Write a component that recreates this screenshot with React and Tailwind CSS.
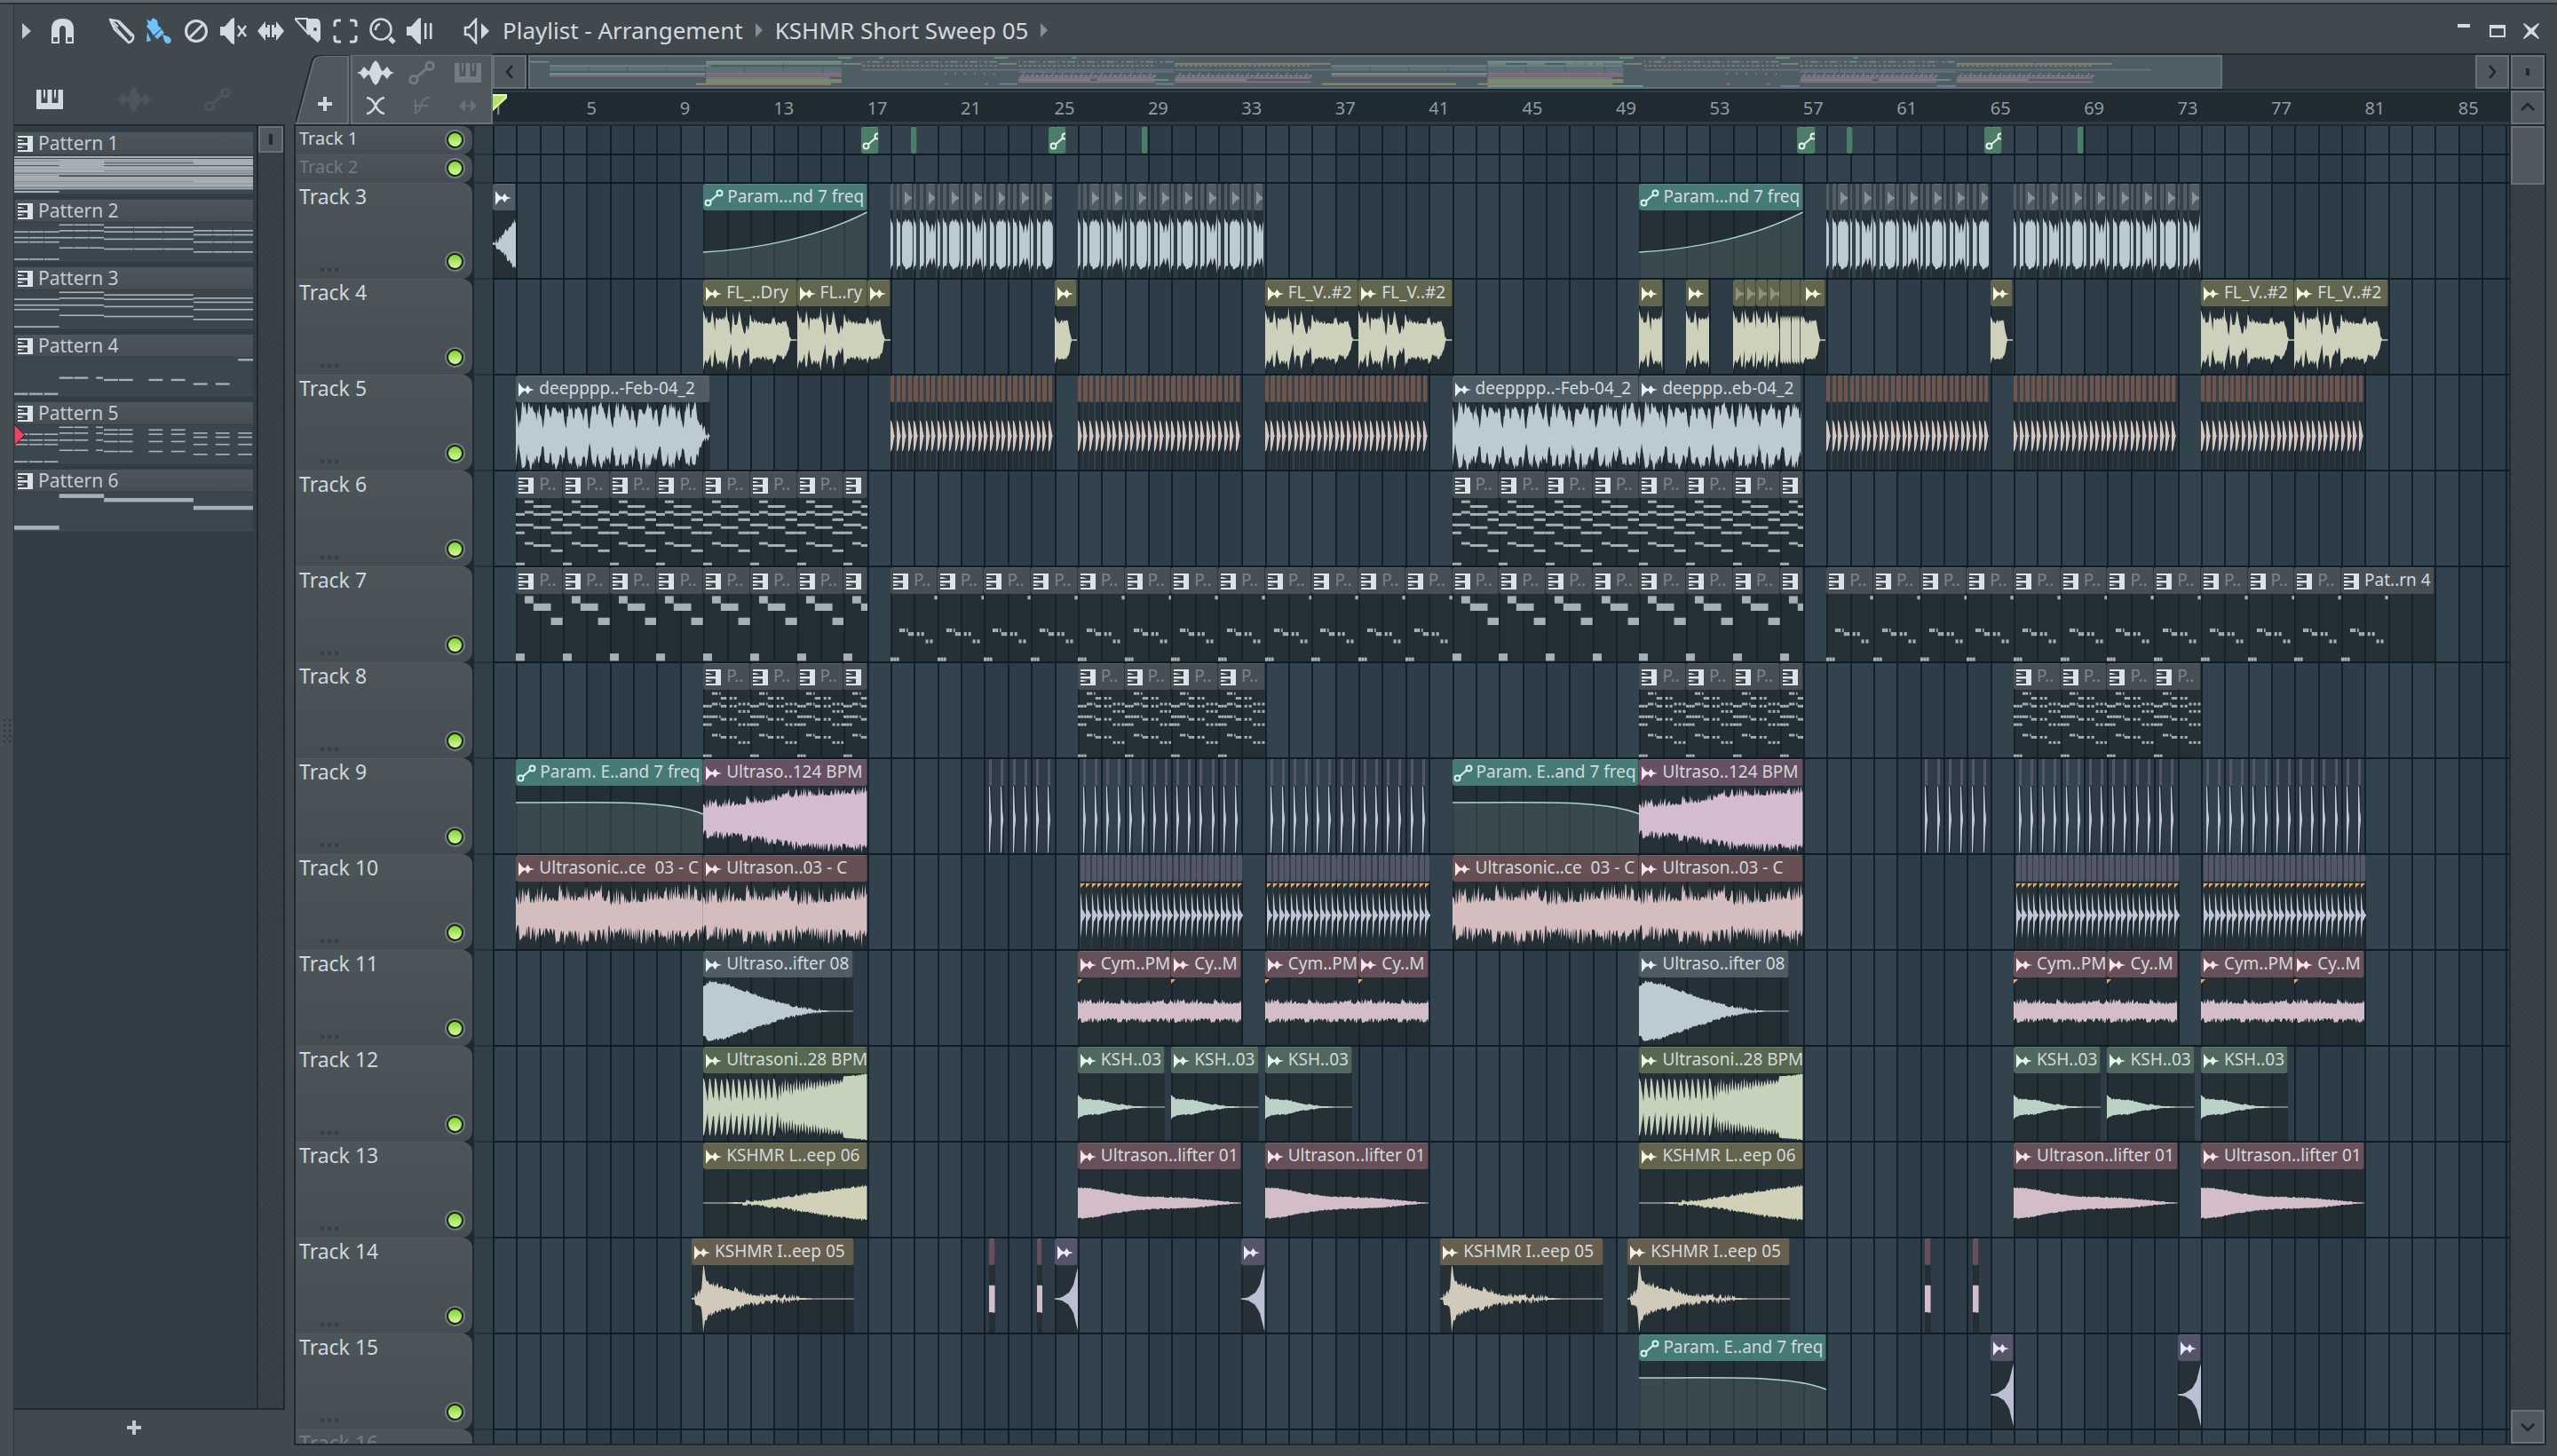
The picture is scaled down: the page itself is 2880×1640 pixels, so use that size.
import React from "react";
import clsx from "clsx";

// Visible length of the arrangement, in bars
const BARS = 86.17;
const MAP_BARS = 86.5;

const THEMES = {
  steel: { head: "bg-[#4f5c65]", ink: "text-[#e6f2f8]", wave: "fill-[#bccad2]", map: "fill-[#75909b]" },
  slate: { head: "bg-[#515d62]", ink: "text-[#86949a]", wave: "fill-[#bccad2]", map: "fill-[#75909b]" },
  pattern: { head: "bg-[#474e54]", ink: "text-[#d9e3e8]", wave: "fill-[#aeb7bd]", map: "fill-[#697b84]" },
  teal: { head: "bg-[#457a76]", ink: "text-[#d8f3ef]", wave: "fill-[#b0e0da]", map: "fill-[#74b3ae]" },
  green: { head: "bg-[#4c7d69]", ink: "text-[#e0f5ea]", wave: "fill-[#bdd2c6]", map: "fill-[#66a989]" },
  olive: { head: "bg-[#62664e]", ink: "text-[#f6f7dc]", wave: "fill-[#cdd1bc]", map: "fill-[#8f9372]" },
  oliveDim: { head: "bg-[#62664e]", ink: "text-[#8f9377]", wave: "fill-[#cdd1bc]", map: "fill-[#8f9372]" },
  brown: { head: "bg-[#6b574f]", ink: "text-[#d6c4bf]", wave: "fill-[#d6c4bf]", map: "fill-[#a07f70]" },
  purple: { head: "bg-[#665063]", ink: "text-[#f8e4f4]", wave: "fill-[#d3bccf]", map: "fill-[#a07594]" },
  rose: { head: "bg-[#665053]", ink: "text-[#f8e6e6]", wave: "fill-[#d3bdbf]", map: "fill-[#ab7079]" },
  pink: { head: "bg-[#67505a]", ink: "text-[#f8e4ec]", wave: "fill-[#d3bdc8]", map: "fill-[#a8728a]" },
  moss: { head: "bg-[#586850]", ink: "text-[#ecf7e0]", wave: "fill-[#c6d2bb]", map: "fill-[#83a076]" },
  mint: { head: "bg-[#50685d]", ink: "text-[#e2f7ec]", wave: "fill-[#bdd2c6]", map: "fill-[#6f9f88]" },
  khaki: { head: "bg-[#64644f]", ink: "text-[#f8f8de]", wave: "fill-[#d1d1b8]", map: "fill-[#a5a070]" },
  tan: { head: "bg-[#665e4f]", ink: "text-[#f8f0de]", wave: "fill-[#d1cabb]", map: "fill-[#a89a6c]" },
  violet: { head: "bg-[#55546b]", ink: "text-[#e8e8fa]", wave: "fill-[#bcbed3]", map: "fill-[#8284ae]" },
  dusk: { head: "bg-[#535768]", ink: "text-[#bcc4d3]", wave: "fill-[#bfc5d4]", map: "fill-[#8a93ad]" },
};

// Amplitude envelopes. Keys run over the clip (0..1), or over bars when "bars" is set.
const SHAPES = {
  swell: { noise: 0.08, keys: [[0, 0.03], [0.25, 0.08], [0.45, 0.25], [0.7, 0.5], [0.9, 0.65], [1, 0.66]] },
  chopShort: { noise: 0.03, keys: [[0, 0.78], [0.4, 0.66], [0.9, 0.6], [1, 0.5]] },
  chopFat: { noise: 0.06, keys: [[0, 0.5], [0.15, 0.7], [0.5, 0.68], [0.85, 0.64], [1, 0.5]] },
  chopSpike: { noise: 0.06, keys: [[0, 0.7], [0.25, 0.6], [0.4, 0.3], [0.55, 0.62], [0.75, 0.35], [0.9, 0.6], [1, 0.9]] },
  vocal: {
    bars: true,
    noise: 0.09,
    keys: [[0, 0.86], [0.08, 0.68], [0.25, 0.5], [0.32, 0.35], [0.36, 0.86], [0.45, 0.6], [0.5, 0.2], [0.55, 0.62], [0.75, 0.66],
      [0.95, 0.6], [1, 0.97], [1.06, 0.55], [1.2, 0.15], [1.27, 0.8], [1.33, 0.5], [1.45, 0.45], [1.54, 0.92], [1.62, 0.6],
      [1.76, 0.2], [1.85, 0.35], [1.95, 0.2], [2, 0.8], [2.1, 0.55], [2.4, 0.55], [2.9, 0.5], [3, 0.66], [3.15, 0.48],
      [3.55, 0.52], [3.68, 0.15], [3.76, 0.02], [4, 0.02]],
  },
  tail: { noise: 0.06, keys: [[0, 0.68], [0.15, 0.5], [0.5, 0.55], [0.6, 0.5], [0.73, 0.08], [0.76, 0.02], [1, 0.02]] },
  pad: {
    bars: true,
    every: 1,
    noise: 0.14,
    keys: [[0, 0.85], [0.05, 0.65], [0.13, 0.22], [0.2, 0.45], [0.27, 0.88], [0.4, 0.85], [0.48, 0.5], [0.55, 0.86], [0.68, 0.9],
      [0.8, 0.75], [0.88, 0.5], [0.94, 0.65], [1, 0.85]],
  },
  riser: { noise: 0.14, keys: [[0, 0.4], [0.2, 0.48], [0.4, 0.6], [0.55, 0.74], [0.8, 0.8], [1, 0.82]] },
  drone: {
    bars: true,
    every: 4,
    noise: 0.26,
    keys: [[0, 0.44], [1, 0.52], [2, 0.58], [3, 0.6], [3.9, 0.56], [4, 0.44]],
  },
  fall: { noise: 0.04, keys: [[0, 0.72], [0.04, 0.86], [0.15, 0.8], [0.3, 0.56], [0.45, 0.34], [0.6, 0.14], [0.75, 0.04], [0.85, 0.015], [1, 0.015]] },
  hiss: { noise: 0.08, keys: [[0, 0.26], [1, 0.26]] },
  gate: {
    bars: true,
    noise: 0.02,
    keys: [
      ...Array.from({ length: 13 }, (_, i) => [[i * 0.25, 0.85], [i * 0.25 + 0.06, 0.8], [i * 0.25 + 0.2, 0.12]]).flat(),
      ...Array.from({ length: 22 }, (_, i) => [[3.25 + i * 0.125, 0.86], [3.31 + i * 0.125, 0.25 + i * 0.02]]).flat(),
      [6, 0.92], [6.5, 0.93], [7, 0.98],
    ],
  },
  sweep: { noise: 0.04, keys: [[0, 0.015], [0.15, 0.015], [0.3, 0.05], [0.5, 0.16], [0.7, 0.32], [0.85, 0.43], [1, 0.5]] },
  drop: { noise: 0.02, keys: [[0, 0.45], [0.1, 0.42], [0.25, 0.28], [0.4, 0.19], [0.7, 0.14], [0.85, 0.07], [0.95, 0.02], [1, 0.015]] },
  pluck: { noise: 0.02, keys: [[0, 0.36], [0.06, 0.23], [0.25, 0.21], [0.45, 0.09], [0.65, 0.03], [0.8, 0.015], [1, 0.015]] },
  impact: { noise: 0.08, keys: [[0, 0.01], [0.06, 0.2], [0.072, 1], [0.085, 0.6], [0.12, 0.42], [0.25, 0.28], [0.4, 0.11], [0.6, 0.04], [0.75, 0.015], [1, 0.015]] },
  reverse: { noise: 0.01, keys: [[0, 0.015], [0.3, 0.04], [0.6, 0.18], [0.8, 0.42], [0.92, 0.75], [1, 0.97]] },
  block: { noise: 0.01, keys: [[0, 0.4], [1, 0.4]] },
  kick: { noise: 0, keys: [[0, 0.46], [0.25, 0.44], [0.6, 0.2], [0.8, 0.015], [1, 0.015]] },
  tick: { noise: 0, keys: [[0, 1], [0.4, 0.95], [0.6, 0.3], [0.9, 0.1], [1, 0.02]] },
  snap: { noise: 0, keys: [[0, 0.68], [0.12, 0.66], [0.25, 0.2], [0.6, 0.12], [0.9, 0.02], [1, 0.02]] },
};

const noise = (i) => {
  const v = Math.sin(i * 127.1 + 11.7) * 43758.5453;
  return v - Math.floor(v);
};

const sample = (keys, t) => {
  for (let i = 1; i < keys.length; i++) {
    const [t1, a1] = keys[i];
    if (t <= t1) {
      const [t0, a0] = keys[i - 1];
      return a0 + ((a1 - a0) * (t - t0)) / (t1 - t0 || 1);
    }
  }
  return keys[keys.length - 1][1];
};

const wavePath = (shape, bars, offset = 0, fade = false) => {
  const steps = Math.max(6, Math.round(bars * 26));
  const top = [];
  const bottom = [];
  for (let i = 0; i <= steps; i++) {
    let t = i / steps;
    if (shape.bars) t = offset + t * bars;
    const left = bars - t;
    if (shape.every) t = t % shape.every;
    let a = sample(shape.keys, t);
    if (fade && left < 0.6) a = Math.min(a, left < 0.3 ? left * 0.5 : left * 1.4 - 0.2);
    const jitter = a > 0.03 ? shape.noise : 0;
    const up = Math.max(0.015, Math.min(1, a + jitter * (noise(i) ** 2 * 2 - 0.6)));
    const down = Math.max(0.015, Math.min(1, a + jitter * (noise(i + 500) ** 2 * 2 - 0.6)));
    top.push(`${i} ${(38 - up * 38).toFixed(1)}`);
    bottom.unshift(`${i} ${(38 + down * 38).toFixed(1)}`);
  }
  return { steps, d: `M${top.join("L")}L${bottom.join("L")}Z` };
};

// Notes as [x, y, width] on a 753 x 128 sheet
const STEP_X = [[0, 142], [142, 141], [283, 282], [565, 188]];
const CHORDS = [[125, 66, 51, 31], [7, 27, 51, 86], [16, 31, 56, 90], [27, 41, 66, 100]];
const CUTS = [
  [[0, 43], [47, 43], [94, 44]],
  [[142, 44], [189, 44], [258, 22]],
  [[283, 44], [330, 44], [424, 44], [495, 44]],
  [[565, 44], [635, 44], [706, 44]],
];

const held = CHORDS.flatMap((ys, i) => ys.map((y) => [STEP_X[i][0], y, STEP_X[i][1]]));
const cut = (ys, i) => ys.flatMap((y) => CUTS[i].map(([x, w]) => [x, y, w]));

const NOTES = {
  1: {
    h: 6,
    list: [
      ...[6, 15, 22, 31, 40, 45, 50, 57, 65, 76, 82, 87, 94, 101, 106, 114].map((y) => [0, y, 753]),
      ...[27, 53, 71].map((y) => [0, y, 142]),
      ...[19, 27, 36, 53].map((y) => [142, y, 141]),
      ...[19, 27, 90].map((y) => [565, y, 188]),
      [0, 125, 142],
    ],
  },
  2: {
    h: 5,
    list: held.flatMap(([x, y, w]) => [[x, y, w / 3 - 2], [x + w / 3, y, w / 3 - 2], [x + (w * 2) / 3, y, w / 3]]),
  },
  3: { h: 5, list: held },
  4: {
    h: 7,
    list: [...cut([124], 0), ...cut([69], 1), ...cut([76], 2), [565, 90, 44], [635, 90, 44], [706, 7, 47]],
  },
  5: { h: 5, list: CHORDS.flatMap((ys, i) => cut(ys, i)) },
  6: { h: 14, list: [[0, 120, 142], [142, 11, 141], [283, 25, 282], [565, 52, 188]] },
};

const twice = (clips) => clips.flatMap((c) => [c, { ...c, at: c.at + 40 }]);
const run = (at, count, step, props) => Array.from({ length: count }, (_, i) => ({ at: at + i * step, len: step, ...props }));

const patterns = (from, to, id) => {
  const clips = [];
  for (let at = from; at < to; at += 2) {
    const len = Math.min(2, to - at);
    clips.push({ at, len, theme: "pattern", icon: "keys", notes: id, label: len > 1 ? "P.." : "" });
  }
  return clips;
};

const chops = (from, to) => {
  const clips = [];
  for (let at = from; at < to; at++) {
    const odd = (at - from) % 2;
    clips.push({ at, len: 0.11, theme: "slate", wave: "chopShort" });
    clips.push({ at: at + 0.25, len: 0.18, theme: "slate", wave: "chopShort" });
    clips.push({ at: at + 0.5, len: 0.45, theme: "slate", icon: "audio", wave: odd ? "chopSpike" : "chopFat" });
  }
  return clips;
};

const ticks = (at, count) => run(at, count, 0.5, { len: 0.12, theme: "dusk", wave: "tick" });
const snaps = (at) => run(at, 28, 0.25, { len: 0.23, theme: "dusk", wave: "snap", flag: true });
const kicks = (at) => run(at, 28, 0.25, { len: 0.2, theme: "brown", wave: "kick" });

const TRACKS = [
  {
    name: "Track 1",
    small: true,
    clips: twice([
      { at: 15.75, len: 0.77, theme: "green", icon: "curve" },
      { at: 17.87, len: 0.26, theme: "green" },
      { at: 23.75, len: 0.77, theme: "green", icon: "curve" },
      { at: 27.73, len: 0.27, theme: "green" },
    ]),
  },
  { name: "Track 2", small: true, muted: true, clips: [] },
  {
    name: "Track 3",
    clips: [
      { at: 0, len: 1, theme: "steel", icon: "audio", wave: "swell" },
      ...twice([
        { at: 9, len: 7, theme: "teal", icon: "curve", label: "Param...nd 7 freq", curve: "rise" },
        ...chops(17, 24),
        ...chops(25, 33),
      ]),
    ],
  },
  {
    name: "Track 4",
    clips: [
      { at: 9, len: 4, theme: "olive", icon: "audio", label: "FL_..Dry", wave: "vocal" },
      { at: 13, len: 3, theme: "olive", icon: "audio", label: "FL..ry", wave: "vocal" },
      { at: 16, len: 1, theme: "olive", icon: "audio", wave: "vocal", offset: 3 },
      ...twice([
        { at: 24, len: 0.95, theme: "olive", icon: "audio", wave: "tail" },
        { at: 33, len: 4, theme: "olive", icon: "audio", label: "FL_V..#2", wave: "vocal" },
        { at: 37, len: 4, theme: "olive", icon: "audio", label: "FL_V..#2", wave: "vocal" },
      ]),
      { at: 49, len: 1, theme: "olive", icon: "audio", wave: "vocal" },
      { at: 51, len: 1, theme: "olive", icon: "audio", wave: "vocal" },
      ...run(53, 4, 0.5, { theme: "oliveDim", icon: "audio", wave: "vocal" }),
      ...run(55, 8, 0.125, { theme: "oliveDim", wave: "chopFat" }),
      { at: 56, len: 0.95, theme: "olive", icon: "audio", wave: "tail" },
    ],
  },
  {
    name: "Track 5",
    clips: [
      { at: 1, len: 8.3, theme: "steel", icon: "audio", label: "deepppp..-Feb-04_2", wave: "pad", fade: true },
      { at: 41, len: 8, theme: "steel", icon: "audio", label: "deepppp..-Feb-04_2", wave: "pad" },
      { at: 49, len: 6.93, theme: "steel", icon: "audio", label: "deeppp..eb-04_2", wave: "pad" },
      ...twice([...kicks(17), ...kicks(25), ...kicks(33)]),
    ],
  },
  { name: "Track 6", clips: twice(patterns(1, 16, 3)) },
  {
    name: "Track 7",
    clips: [
      ...twice(patterns(1, 16, 6)),
      ...patterns(17, 41, 4),
      ...patterns(57, 79, 4),
      { at: 79, len: 4, theme: "pattern", icon: "keys", label: "Pat..rn 4", bright: true, notes: 4, half: true },
    ],
  },
  { name: "Track 8", clips: twice([...patterns(9, 16, 5), ...patterns(25, 33, 5)]) },
  {
    name: "Track 9",
    clips: twice([
      { at: 1, len: 8, theme: "teal", icon: "curve", label: "Param. E..and 7 freq", curve: "dip" },
      { at: 9, len: 7, theme: "purple", icon: "audio", label: "Ultraso..124 BPM", wave: "riser" },
      ...ticks(21.22, 6),
      ...ticks(25.22, 14),
      ...ticks(33.22, 14),
    ]),
  },
  {
    name: "Track 10",
    clips: twice([
      { at: 1, len: 8, theme: "rose", icon: "audio", label: "Ultrasonic..ce  03 - C", wave: "drone" },
      { at: 9, len: 7, theme: "rose", icon: "audio", label: "Ultrason..03 - C", wave: "drone" },
      ...snaps(25.1),
      ...snaps(33.1),
    ]),
  },
  {
    name: "Track 11",
    clips: twice([
      { at: 9, len: 6.4, theme: "steel", icon: "audio", label: "Ultraso..ifter 08", wave: "fall" },
      { at: 25, len: 4, theme: "pink", icon: "audio", label: "Cym..PM", wave: "hiss", flag: true },
      { at: 29, len: 3, theme: "pink", icon: "audio", label: "Cy..M", wave: "hiss", flag: true },
      { at: 33, len: 4, theme: "pink", icon: "audio", label: "Cym..PM", wave: "hiss", flag: true },
      { at: 37, len: 3, theme: "pink", icon: "audio", label: "Cy..M", wave: "hiss", flag: true },
    ]),
  },
  {
    name: "Track 12",
    clips: twice([
      { at: 9, len: 7, theme: "moss", icon: "audio", label: "Ultrasoni..28 BPM", wave: "gate" },
      { at: 25, len: 3.73, theme: "mint", icon: "audio", label: "KSH..03", wave: "pluck" },
      { at: 29, len: 3.73, theme: "mint", icon: "audio", label: "KSH..03", wave: "pluck" },
      { at: 33, len: 3.73, theme: "mint", icon: "audio", label: "KSH..03", wave: "pluck" },
    ]),
  },
  {
    name: "Track 13",
    clips: twice([
      { at: 9, len: 7, theme: "khaki", icon: "audio", label: "KSHMR L..eep 06", wave: "sweep" },
      { at: 25, len: 7, theme: "pink", icon: "audio", label: "Ultrason..lifter 01", wave: "drop" },
      { at: 33, len: 7, theme: "pink", icon: "audio", label: "Ultrason..lifter 01", wave: "drop" },
    ]),
  },
  {
    name: "Track 14",
    clips: [
      ...twice([
        { at: 8.5, len: 6.95, theme: "tan", icon: "audio", label: "KSHMR I..eep 05", wave: "impact" },
        { at: 21.22, len: 0.25, theme: "pink", wave: "block" },
        { at: 23.25, len: 0.25, theme: "pink", wave: "block" },
      ]),
      { at: 40.5, len: 6.95, theme: "tan", icon: "audio", label: "KSHMR I..eep 05", wave: "impact" },
      { at: 24, len: 1, theme: "violet", icon: "audio", wave: "reverse" },
      { at: 32, len: 1, theme: "violet", icon: "audio", wave: "reverse" },
    ],
  },
  {
    name: "Track 15",
    clips: [
      { at: 49, len: 8, theme: "teal", icon: "curve", label: "Param. E..and 7 freq", curve: "dip" },
      { at: 64, len: 1, theme: "violet", icon: "audio", wave: "reverse" },
      { at: 72, len: 1, theme: "violet", icon: "audio", wave: "reverse" },
    ],
  },
  { name: "Track 16", muted: true, clips: [] },
];

/* ---------- icons ---------- */

const AudioIcon = () => (
  <svg viewBox="0 0 18 16" className="h-4 w-[18px] shrink-0 fill-current">
    <path d="M0 0L4.5 5.5L7.5 7L10.5 3L13 6.8L18 8L13 9.2L10.5 13L7.5 9L4.5 10.5L0 16Z" />
  </svg>
);

const CurveIcon = ({ className = "h-5 w-[22px]" }) => (
  <svg viewBox="0 0 22 20" className={clsx("shrink-0 fill-none stroke-current", className)} strokeWidth="2">
    <circle cx="4.5" cy="15.5" r="3" />
    <circle cx="17.5" cy="4.5" r="3" />
    <path d="M7 13.5L15 6.5" />
  </svg>
);

const KeysIcon = () => (
  <svg viewBox="0 0 17 18" className="h-[18px] w-[17px] shrink-0">
    <path d="M0 0H17V18H0Z" className="fill-[#dbe4e9]" />
    <path d="M0 2H11V8H0ZM0 10.5H11V16H0Z" className="fill-[#3c444b]" />
    <path d="M0 4H2L8 5.5L2 6H0ZM0 12H2L8 13L2 14H0Z" className="fill-[#dbe4e9]" />
  </svg>
);

const PianoIcon = () => (
  <svg viewBox="0 0 30 22" className="h-[22px] w-[30px] fill-current">
    <path d="M0 0H5.5V15H12.5V0H17.5V15H24.5V0H30V22H0Z" />
    <path d="M8 0H10V7L9 11L8 7ZM20 0H22V7L21 11L20 7Z" />
  </svg>
);

const WaveIcon = () => (
  <svg viewBox="0 0 42 28" className="h-7 w-[42px] fill-current">
    <path d="M0 14L4 12.5L8 7L12 11.5L14 12L18 3L21 0L24 3L28 12L30 11.5L34 7L38 12.5L42 14L38 15.5L34 21L30 16.5L28 16L24 25L21 28L18 25L14 16L12 16.5L8 21L4 15.5Z" />
  </svg>
);

const TOOLS = [
  {
    label: "Draw",
    art: (
      <g fill="none" stroke="currentColor" strokeWidth="2.5" strokeLinejoin="round">
        <path d="M2 2L12 4L28 20Q29 26 23 28L7 13L2 2Z" />
        <path d="M6 8L21 25M11 5L26 21M2 2L11 10" strokeWidth="1.8" />
      </g>
    ),
  },
  {
    label: "Paint",
    active: true,
    art: (
      <g fill="currentColor">
        <path d="M1 2L6 4L8 0L13 3L14 9L18 12L9 20L5 14L1 10L3 7Z" />
        <path d="M2 16L6 26L1 27ZM18 13L21 17L13 24L10 21Z" />
        <path d="M19 19L25 21Q30 23 28 28Q23 31 21 26Z" />
      </g>
    ),
  },
  {
    label: "Delete",
    art: (
      <g fill="none" stroke="currentColor" strokeWidth="3">
        <circle cx="15" cy="15" r="11.5" />
        <path d="M7 23L23 7" />
      </g>
    ),
  },
  {
    label: "Mute",
    art: (
      <g>
        <path d="M0 10H5L13 1L16 0V30L13 29L5 20H0Z" fill="currentColor" />
        <path d="M20 9L29 21M29 9L20 21" stroke="currentColor" strokeWidth="2.5" />
      </g>
    ),
  },
  {
    label: "Slip",
    art: <path d="M0 15L9 4V11H11V8H14V22H11V19H9V26ZM30 15L21 4V11H19V8H16V22H19V19H21V26Z" fill="currentColor" />,
  },
  {
    label: "Slice",
    art: (
      <g>
        <path d="M0 1L16 19L14 12V1Z" fill="none" stroke="currentColor" strokeWidth="2" />
        <path d="M14 1H25Q29 2 29 8V24L26 28L18 21L14 12Z" fill="currentColor" />
        <circle cx="23" cy="13" r="2" className="fill-[#41494f]" />
      </g>
    ),
  },
  {
    label: "Select",
    art: <path d="M10 3H6Q3 3 3 6V10M20 3H24Q27 3 27 6V10M10 27H6Q3 27 3 24V20M20 27H24Q27 27 27 24V20" fill="none" stroke="currentColor" strokeWidth="3" />,
  },
  {
    label: "Zoom",
    art: (
      <g fill="none" stroke="currentColor" strokeWidth="2.5">
        <circle cx="13" cy="13" r="11.5" />
        <path d="M7 14Q7 8 12 7" />
        <path d="M23 23L28 28" strokeWidth="5" />
      </g>
    ),
  },
  {
    label: "Playback",
    art: (
      <g fill="currentColor">
        <path d="M0 10H5L13 1L16 0V30L13 29L5 20H0Z" />
        <path d="M20 6H22.500V24H20ZM26 6H28.500V24H26Z" />
      </g>
    ),
  },
];

const Chevron = ({ d }) => (
  <svg viewBox="0 0 20 20" className="h-5 w-5 fill-none stroke-[#1d252b]" strokeWidth="2.5">
    <path d={d} />
  </svg>
);

const Plus = () => (
  <svg viewBox="0 0 16 16" className="h-4 w-4 fill-current">
    <path d="M6 0H10V6H16V10H10V16H6V10H0V6H6Z" />
  </svg>
);

const Square = ({ label, children, className }) => (
  <button
    type="button"
    aria-label={label}
    className={clsx("flex h-[38px] shrink-0 items-center justify-center border-2 border-[#697178] bg-[#50575e]", className)}
  >
    {children}
  </button>
);

/* ---------- window bar ---------- */

const Breadcrumb = () => (
  <svg viewBox="0 0 8 16" className="h-4 w-2 fill-[#878e93]">
    <path d="M0 0L8 8L0 16Z" />
  </svg>
);

const Toolbar = () => (
  <header className="flex h-[55px] shrink-0 items-center pt-1 pr-2.5 text-[#d3dade]">
    <button type="button" aria-label="Menu" className="flex w-7 justify-center">
      <svg viewBox="0 0 10 18" className="h-[18px] w-2.5 fill-[#c3c9cd]">
        <path d="M0 0L10 9L0 18Z" />
      </svg>
    </button>
    <button type="button" aria-label="Snap" className="flex w-[52px] justify-center">
      <svg viewBox="0 0 27 28" className="h-7 w-[27px] fill-current">
        <path d="M1 28V12Q1 0 13.500 0T26 12V28H17V13Q17 8 13.500 8T10 13V28Z" />
        <path d="M3 21H8V26H3ZM19 21H24V26H19Z" className="fill-[#4b5359]" />
      </svg>
    </button>
    <div className="ml-5 flex">
      {TOOLS.map(({ label, art, active }) => (
        <button
          key={label}
          type="button"
          aria-label={label}
          className={clsx("flex h-10 w-[42px] items-center justify-center", active && "text-[#6fc3fb]")}
        >
          <svg viewBox="0 0 30 30" className="h-[30px] w-[30px]">
            {art}
          </svg>
        </button>
      ))}
    </div>
    <svg viewBox="0 0 30 30" className="ml-7 h-[30px] w-[30px]">
      <path d="M2 11H6L14 2V28L6 19H2Z" fill="none" stroke="currentColor" strokeWidth="2.5" />
      <path d="M20 6L29 15L20 24Z" fill="currentColor" />
    </svg>
    <h1 className="ml-3.5 flex items-center gap-3.5 pb-0.5 text-[26px] leading-8 whitespace-pre">
      <span>Playlist - Arrangement</span>
      <Breadcrumb />
      <span>KSHMR Short Sweep 05</span>
      <Breadcrumb />
    </h1>
    <div className="ml-auto flex">
      <button type="button" aria-label="Minimize" className="flex h-8 w-[38px] items-start justify-center pt-2">
        <span className="h-1 w-3.5 bg-current" />
      </button>
      <button type="button" aria-label="Maximize" className="flex h-8 w-[38px] items-center justify-center">
        <span className="h-3.5 w-[18px] border-2 border-t-4 border-current" />
      </button>
      <button type="button" aria-label="Close" className="flex h-8 w-[38px] items-center justify-center">
        <svg viewBox="0 0 18 18" className="h-[18px] w-[18px] fill-current">
          <path d="M0 1L1 0L9 6L17 0L18 1L12 9L18 17L17 18L9 12L1 18L0 17L6 9Z" />
        </svg>
      </button>
    </div>
  </header>
);

/* ---------- pattern picker ---------- */

const NoteSheet = ({ id, className }) => {
  const { h, list } = NOTES[id];
  return (
    <svg viewBox="0 0 753 128" preserveAspectRatio="none" className={clsx("block fill-[#a7b0b6]", className)}>
      {list.map(([x, y, w], i) => (
        <rect key={i} x={x} y={y - h / 2} width={w} height={h} />
      ))}
    </svg>
  );
};

const PatternItem = ({ id, marked }) => (
  <li className="relative mb-[7px]">
    <div className="ml-px flex h-[25px] items-center gap-1.5 bg-linear-to-b from-[#4d565c] to-[#464e54] pl-[3px]">
      <KeysIcon />
      <span className="pb-0.5 text-[21px] leading-6 text-[#c3cbcf]">Pattern {id}</span>
    </div>
    <div className="mt-px h-[43px] border-b border-[#434d55] bg-[#3c464e]">
      <NoteSheet id={id} className="h-full w-full" />
    </div>
    {marked && (
      <svg viewBox="0 0 13 24" className="absolute top-[25px] left-0 h-6 w-[13px] fill-[#ea4460] stroke-[#2a1a20]">
        <path d="M0 0L12 12L0 24Z" />
      </svg>
    )}
  </li>
);

const Picker = () => (
  <aside className="flex w-[305px] shrink-0 flex-col">
    <div className="flex h-20 items-end pb-3.5 text-[#4e565c]">
      <button type="button" aria-label="Patterns" className="flex h-7 w-20 items-center justify-center text-[#d3dade]">
        <PianoIcon />
      </button>
      <button type="button" aria-label="Audio clips" className="ml-[18px] flex h-7 w-[74px] items-center justify-center">
        <WaveIcon />
      </button>
      <button type="button" aria-label="Automation clips" className="ml-5 flex h-7 w-[74px] items-center justify-center">
        <CurveIcon className="h-7 w-8" />
      </button>
    </div>
    <div className="flex min-h-0 flex-1 border-y-2 border-r-2 border-[#20292f]">
      <ul className="min-w-0 flex-1 bg-[#333d45] pt-[7px] pr-1">
        {[1, 2, 3, 4, 5, 6].map((id) => (
          <PatternItem key={id} id={id} marked={id === 5} />
        ))}
      </ul>
      <div className="w-[30px] border-l-2 border-[#20292f] bg-[repeating-linear-gradient(45deg,#363d44_0_2px,#3a4148_2px_4px)]">
        <div className="flex h-[30px] items-center justify-center border-2 border-[#697178] bg-[#50575e]">
          <span className="h-3 w-1 bg-[#20292f]" />
        </div>
      </div>
    </div>
    <button type="button" aria-label="Add pattern" className="flex h-[52px] items-center justify-center pr-9 pb-3 text-[#c3cacf]">
      <Plus />
    </button>
  </aside>
);

/* ---------- playlist ---------- */

const ModePanel = () => (
  <div className="flex h-[78px] w-[222px] shrink-0 text-[#747c81]">
    <button type="button" aria-label="Add track" className="relative h-full w-[60px] text-[#d3dade]">
      <svg viewBox="0 0 60 78" className="h-full w-full">
        <path d="M1 78L20 8Q22 1 30 1H59V77H1Z" className="fill-[#50575e] stroke-[#697178]" strokeWidth="2" />
        <path d="M0 76L18 8Q20 0 30 0H60" className="fill-none stroke-[#232b31]" strokeWidth="2" />
      </svg>
      <span className="absolute top-[47px] left-[25px]">
        <Plus />
      </span>
    </button>
    <div className="ml-0.5 grid flex-1 grid-cols-3 grid-rows-2 place-items-center border-2 border-t border-[#697178] bg-[#50575e]">
      <button type="button" aria-label="Audio" className="text-[#d3dade]">
        <WaveIcon />
      </button>
      <button type="button" aria-label="Automation">
        <CurveIcon className="h-7 w-8" />
      </button>
      <button type="button" aria-label="Piano">
        <PianoIcon />
      </button>
      <button type="button" aria-label="Crossfade" className="text-[#d3dade]">
        <svg viewBox="0 0 20 20" className="h-5 w-5 fill-none stroke-current" strokeWidth="2.5">
          <path d="M0 1Q6 2 9 8Q13 18 20 19M20 1Q14 2 11 8Q7 18 0 19" />
        </svg>
      </button>
      <button type="button" aria-label="Envelope" className="text-[#697177]">
        <svg viewBox="0 0 20 20" className="h-5 w-5 fill-none stroke-current" strokeWidth="2">
          <path d="M1 19Q8 18 9 10Q11 1 19 1M3 3V17M1 10H18" />
        </svg>
      </button>
      <button type="button" aria-label="Stretch" className="text-[#697177]">
        <svg viewBox="0 0 20 14" className="h-3.5 w-5 fill-current">
          <path d="M0 7L7 0V5L10 9L13 5V0L20 7L13 14V9L10 5L7 9V14Z" />
        </svg>
      </button>
    </div>
  </div>
);

const Minimap = () => (
  <div className="flex h-10 bg-[#20292f] pb-0.5">
    <Square label="Scroll left" className="w-[38px]">
      <Chevron d="M13 3L7 10L13 17" />
    </Square>
    <div className="ml-0.5 min-w-0 flex-1 bg-[#363c44]">
      <div className="h-full w-[87%] border-2 border-[#65727a] bg-[#4f5d64]">
        <svg viewBox={`0 0 ${MAP_BARS} 15`} preserveAspectRatio="none" className="block h-full w-full opacity-80">
          {TRACKS.map((track, row) =>
            track.clips.map((clip, i) => (
              <rect key={`${row}-${i}`} x={clip.at} y={row + 0.1} width={clip.len - 0.05} height="0.8" className={THEMES[clip.theme].map} />
            ))
          )}
        </svg>
      </div>
    </div>
    <Square label="Scroll right" className="w-[38px]">
      <Chevron d="M7 3L13 10L7 17" />
    </Square>
  </div>
);

const Ruler = () => (
  <div className="relative h-[38px] overflow-hidden border-t-2 border-b-3 border-[#2f3c44] bg-[#1f2a31]">
    {Array.from({ length: 22 }, (_, i) => (
      <span
        key={i}
        className="absolute top-1 text-[20px] leading-7 text-[#929ca2]"
        style={{ left: `${((i * 4) / BARS) * 100}%` }}
      >
        {i * 4 + 1}
      </span>
    ))}
    <svg viewBox="0 0 17 20" className="absolute top-0.5 left-0 h-5 w-[17px] fill-[#b2e566] stroke-[#e6fbb0]" strokeWidth="2">
      <path d="M-2 1H15V4L0 18Z" />
    </svg>
  </div>
);

const TrackHead = ({ track }) => (
  <div
    className={clsx(
      "relative flex shrink-0 items-start justify-between rounded-r-xl border-t border-[#525b61] bg-linear-to-b from-[#4c555a] to-[#464d53] pl-1",
      track.small ? "h-8" : "h-[108px]"
    )}
  >
    <span
      className={clsx(
        track.small ? "pt-px text-[20px] leading-6" : "text-[23px] leading-7",
        track.muted ? "text-[#737b80]" : "text-[#d0d7da]"
      )}
    >
      {track.name}
    </span>
    {!track.small && (
      <span className="absolute bottom-2 left-7 flex gap-1">
        <i className="h-1 w-1 bg-[#393f46]" />
        <i className="h-1 w-1 bg-[#393f46]" />
        <i className="h-1 w-1 bg-[#393f46]" />
      </span>
    )}
    <button
      type="button"
      aria-label={`Mute ${track.name}`}
      className={clsx(
        "mr-2 h-[23px] w-[23px] rounded-full border-2 border-[#747c80] bg-[#12240c] p-0.5",
        track.small ? "mt-[3px]" : "mt-[76px]"
      )}
    >
      <span className="block h-full w-full rounded-full bg-linear-to-b from-[#7fd41c] to-[#d8f8a4]" />
    </button>
  </div>
);

const CurveFill = ({ kind }) => {
  const line = kind === "rise" ? "M0 47C60 44 130 30 184 2" : "M0 19C90 19 150 16 184 32";
  return (
    <svg viewBox="0 0 184 76" preserveAspectRatio="none" className="block h-full w-full">
      <path d={`${line}V76H0Z`} className="fill-[#b0e0da]/15" />
      <path d={line} className="fill-none stroke-[#a9d6d2]" strokeWidth="1.5" vectorEffect="non-scaling-stroke" />
    </svg>
  );
};

const WaveFill = ({ clip }) => {
  const { steps, d } = wavePath(SHAPES[clip.wave], clip.len, clip.offset, clip.fade);
  return (
    <svg viewBox={`0 0 ${steps} 76`} preserveAspectRatio="none" className={clsx("block h-full w-full", THEMES[clip.theme].wave)}>
      <path d={d} />
    </svg>
  );
};

const ICONS = { audio: AudioIcon, curve: CurveIcon, keys: KeysIcon };

const Clip = ({ clip, small }) => {
  const theme = THEMES[clip.theme];
  const Icon = ICONS[clip.icon];
  const faint = clip.theme === "pattern" && !clip.bright;
  return (
    <div
      className="absolute inset-y-0 flex flex-col overflow-hidden"
      style={{ left: `${(clip.at / BARS) * 100}%`, width: `${(clip.len / BARS) * 100}%` }}
    >
      <div
        className={clsx(
          "flex h-[30px] shrink-0 items-center overflow-hidden rounded-[3px] border-t border-r border-t-white/10 border-r-black/30",
          theme.head,
          theme.ink,
          clip.icon === "curve" ? "gap-1 pl-px" : "pl-[3px]",
          clip.icon === "audio" && "gap-[5px]",
          clip.icon === "keys" && "gap-1.5"
        )}
      >
        {Icon && <Icon />}
        {clip.label && (
          <span className={clsx("pb-1 text-[19px] leading-6 whitespace-pre", faint ? "text-[#7d858a]" : "text-[#d3d9dc]")}>
            {clip.label}
          </span>
        )}
      </div>
      {!small && (
        <div className="relative min-h-0 flex-1 bg-[#1e2429]/60">
          {clip.curve && <CurveFill kind={clip.curve} />}
          {clip.notes && <NoteSheet id={clip.notes} className={clsx("h-full", clip.len === 2 ? "w-full" : clip.half ? "w-1/2" : "w-[200%]")} />}
          {clip.wave && <WaveFill clip={clip} />}
          {clip.flag && (
            <svg viewBox="0 0 5 5" className="absolute top-0.5 left-0 h-[5px] w-[5px] fill-[#f0a860]">
              <path d="M0 0H5L0 5Z" />
            </svg>
          )}
        </div>
      )}
    </div>
  );
};

const GridBackdrop = () => (
  <div className="absolute inset-0">
    {Array.from({ length: 11 }, (_, i) => (
      <div
        key={i}
        className="absolute inset-y-0 bg-[#33434d]"
        style={{ left: `${((i * 8) / BARS) * 100}%`, width: `${(4 / BARS) * 100}%` }}
      />
    ))}
    {Array.from({ length: 87 }, (_, i) => (
      <div key={i} className="absolute inset-y-0 w-0.5 bg-[#11202a]" style={{ left: `${(i / BARS) * 100}%` }} />
    ))}
  </div>
);

const rowHeight = (track) => (track.small ? "h-8" : "h-[108px]");

const Playlist = () => (
  <section className="mr-3 mb-3 ml-2.5 flex min-w-0 flex-1 flex-col border-b-2 border-[#20292f]">
    <div className="flex h-[82px] shrink-0 border-b-2 border-[#20292f]">
      <div className="w-[224px] shrink-0 pt-0.5 pl-0.5">
        <ModePanel />
      </div>
      <div className="min-w-0 flex-1 border-t-2 border-[#20292f]">
        <Minimap />
        <Ruler />
      </div>
      <div className="flex w-[42px] shrink-0 flex-col gap-0.5 border-2 border-b-0 border-[#20292f] bg-[#20292f]">
        <Square label="Detach">
          <span className="h-2 w-1 bg-[#20292f]" />
        </Square>
        <Square label="Scroll up">
          <Chevron d="M3 13L10 6L17 13" />
        </Square>
      </div>
    </div>

    <div className="flex min-h-0 flex-1">
      <div className="flex w-[203px] shrink-0 flex-col overflow-hidden border-l-2 border-[#20292f] bg-[#20292f] pr-0.5">
        {TRACKS.map((track) => (
          <TrackHead key={track.name} track={track} />
        ))}
      </div>
      <div className="w-[21px] shrink-0 overflow-hidden bg-[#333f47] pt-px">
        {TRACKS.map((track) => (
          <div key={track.name} className={clsx("border-b-2 border-[#26323a]", rowHeight(track))} />
        ))}
      </div>
      <div className="relative min-w-0 flex-1 overflow-hidden bg-[#2d3c47] pt-px">
        <GridBackdrop />
        {TRACKS.map((track) => (
          <div key={track.name} className={clsx("relative border-b-2 border-[#0f1c25]", rowHeight(track))}>
            {track.clips.map((clip, i) => (
              <Clip key={i} clip={clip} small={track.small} />
            ))}
          </div>
        ))}
      </div>
      <div className="flex w-[42px] shrink-0 flex-col border-x-2 border-[#20292f] bg-[repeating-linear-gradient(45deg,#363d44_0_2px,#3a4148_2px_4px)]">
        <div className="h-[66px] border-2 border-[#697178] bg-[#50575e]" />
        <Square label="Scroll down" className="mt-auto">
          <Chevron d="M3 7L10 14L17 7" />
        </Square>
      </div>
    </div>
  </section>
);

const App = () => (
  <div className="flex h-screen flex-col overflow-hidden bg-[#41494f] font-['Noto_Sans','Open_Sans',sans-serif]">
    <div className="h-[5px] shrink-0 border-b-2 border-[#2c343a] bg-[#5c646c]" />
    <div className="flex min-h-0 flex-1">
      <div className="flex w-4 shrink-0 items-center justify-center border-r border-[#30383e] bg-[#454d54]">
        <div className="grid grid-cols-2 gap-1">
          {Array.from({ length: 10 }, (_, i) => (
            <i key={i} className="h-0.5 w-0.5 bg-[#2c343a]" />
          ))}
        </div>
      </div>
      <main className="flex min-w-0 flex-1 flex-col">
        <Toolbar />
        <div className="flex min-h-0 flex-1">
          <Picker />
          <Playlist />
        </div>
      </main>
    </div>
  </div>
);

export default App;
